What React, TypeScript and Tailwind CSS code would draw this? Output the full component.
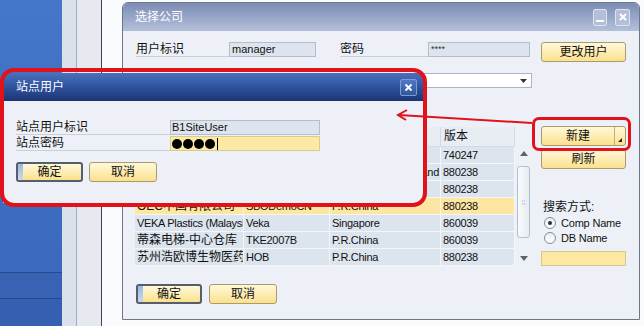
import React from "react";

type Row = { cells: string[]; cjk?: boolean; sel?: boolean; rightCountry?: boolean };

const COLS = ["w-[109px]", "w-[86px]", "w-[111px]", "w-[74px]"];
const HEAD = ["公司名称", "数据库名称", "本地设置", "版本"];

const ROWS: Row[] = [
  { cells: ["OEC Computers HK", "SBODemoHK", "Hong Kong", "740247"] },
  { cells: ["OEC Computers TH", "SBODemoTH", "Thailand", "880238"], rightCountry: true },
  { cells: ["OEC Computers CN", "SBODemoCN2", "P.R.China", "880238"] },
  { cells: ["OEC中国有限公司", "SBODemoCN", "P.R.China", "880238"], cjk: true, sel: true },
  { cells: ["VEKA Plastics (Malaysia)", "Veka", "Singapore", "860039"] },
  { cells: ["蒂森电梯-中心仓库", "TKE2007B", "P.R.China", "860039"], cjk: true },
  { cells: ["苏州浩欧博生物医药", "HOB", "P.R.China", "880238"], cjk: true },
];

function Btn({ children, className, primary }: { children: React.ReactNode; className: string; primary?: boolean }) {
  return (
    <div
      className={`relative flex h-[20px] items-center justify-center overflow-hidden rounded-[3px] bg-gradient-to-b from-[#fff8d9] to-[#fbe08c] text-[12px] leading-[14px] text-[#111] ${
        primary ? "border-2 border-[#555e6b]" : "border border-[#a99b6d]"
      } ${className}`}
    >
      {primary && <div className="absolute left-0 top-0 h-full w-[5px] bg-gradient-to-b from-[#9cb8e0] to-[#c9d9ef]" />}
      <span className="relative">{children}</span>
    </div>
  );
}

function Label({ children, className }: { children: React.ReactNode; className: string }) {
  return (
    <div className={`h-[15px] border-b border-[#c8d0dc] text-[12px] leading-[14px] text-[#111] ${className}`}>{children}</div>
  );
}

function Radio({ checked, label }: { checked?: boolean; label: string }) {
  return (
    <div className="flex h-[15px] items-center pl-[3px]">
      <div className="flex h-[12px] w-[12px] shrink-0 items-center justify-center rounded-full border border-[#7f8b9c] bg-gradient-to-b from-[#e9edf2] to-white">
        {checked && <div className="h-[4px] w-[4px] rounded-full bg-[#2a2f38]" />}
      </div>
      <span className="ml-[5px] whitespace-nowrap text-[11px] leading-[14px] tracking-[-0.2px]">{label}</span>
    </div>
  );
}

function MainDialog() {
  return (
    <div className="mt-[2px] flex h-[318px] w-[518px] shrink-0 flex-col rounded-t-[6px] border border-[#6d7787] bg-[#edf1f7]">
      {/* title bar */}
      <div className="flex h-[28px] items-center justify-between rounded-t-[5px] bg-gradient-to-b from-[#7b8cb5] to-[#b4c0da] pl-[12px] pr-[9px]">
        <span className="text-[12px] leading-[14px] text-white">选择公司</span>
        <div className="flex gap-[8px]">
          <div className="flex h-[17px] w-[14px] items-end justify-center rounded-[2px] border border-[#dde4f0] bg-[#b3bfd8] pb-[3px]">
            <div className="h-[2px] w-[8px] bg-white" />
          </div>
          <div className="flex h-[17px] w-[15px] items-center justify-center rounded-[2px] border border-[#dde4f0] bg-[#b3bfd8]">
            <svg width="8" height="8" viewBox="0 0 8 8">
              <path d="M1 1L7 7M7 1L1 7" stroke="#fff" strokeWidth="2" />
            </svg>
          </div>
        </div>
      </div>

      <div className="flex flex-1 flex-col pl-[13px]">
        {/* user row */}
        <div className="mt-[11px] flex h-[20px] items-start">
          <Label className="w-[93px]">用户标识</Label>
          <div className="h-[15px] w-[87px] border border-[#b4beca] bg-[#dde4ed] pl-[2px] leading-[13px]">manager</div>
          <Label className="ml-[24px] w-[88px]">密码</Label>
          <div className="h-[15px] w-[102px] border border-[#b4beca] bg-[#dde4ed] pl-[2px] text-[9px] leading-[13px] text-[#333]">****</div>
          <Btn className="ml-[11px] w-[85px]">更改用户</Btn>
        </div>

        {/* server row */}
        <div className="mt-[11px] flex h-[15px] items-start">
          <Label className="w-[93px]">当前服务器</Label>
          <div className="flex h-[15px] w-[303px] items-center justify-end border border-[#aab5c4] bg-white pr-[4px]">
            <svg width="7" height="4" viewBox="0 0 7 4">
              <polygon points="0,0 7,0 3.5,4" fill="#333" />
            </svg>
          </div>
        </div>

        {/* list + side column */}
        <div className="-ml-[1px] mt-[38px] flex items-start">
          <div className="mt-[1px] w-[380px]">
            <div className="flex h-[20px]">
              {HEAD.map((h, i) => (
                <div
                  key={h}
                  className={`${COLS[i]} overflow-hidden whitespace-nowrap border-b border-r border-[#d3dbe6] bg-[#e8edf4] pl-[3px] text-[12px] leading-[19px]`}
                >
                  {h}
                </div>
              ))}
            </div>
            {ROWS.map((r, ri) => (
              <div key={ri} className="flex h-[17px]">
                {r.cells.map((c, i) => (
                  <div
                    key={i}
                    className={`${COLS[i]} overflow-hidden whitespace-nowrap border-b border-r border-[#f2f5f9] ${
                      r.sel ? "bg-[#fde6a1]" : "bg-[#dce4ee]"
                    } ${i === 2 && r.rightCountry ? "pr-[1px] text-right" : "pl-[2px]"} ${
                      i === 0 && r.cjk ? "text-[12px] leading-[16px]" : "leading-[16px] tracking-[-0.3px]"
                    }`}
                  >
                    {c}
                  </div>
                ))}
              </div>
            ))}
          </div>

          {/* scrollbar */}
          <div className="ml-[2px] mt-[21px] flex h-[119px] w-[13px] flex-col items-center">
            <div className="flex h-[13px] items-center">
              <svg width="8" height="5" viewBox="0 0 8 5">
                <polygon points="0,5 8,5 4,0" fill="#5c6472" />
              </svg>
            </div>
            <div className="mt-[6px] flex h-[72px] w-[13px] items-center justify-center rounded-[3px] border border-[#b3bece] bg-gradient-to-r from-[#f8fafc] to-[#e6ebf2]">
              <span className="text-[7px] leading-[7px] text-[#a7b0bd]">⁞⁞</span>
            </div>
            <div className="flex-1" />
            <div className="flex h-[16px] items-center">
              <svg width="8" height="5" viewBox="0 0 8 5">
                <polygon points="0,0 8,0 4,5" fill="#5c6472" />
              </svg>
            </div>
          </div>

          {/* right column */}
          <div className="ml-[11px] flex w-[85px] flex-col">
            <div className="flex h-[20px] rounded-[3px] border border-[#a99b6d] bg-gradient-to-b from-[#fff8d9] to-[#fbe08c]">
              <div className="flex flex-1 items-center justify-center text-[12px] leading-[14px]">新建</div>
              <div className="flex w-[11px] items-end justify-center border-l border-[#bcae7d] pb-[3px]">
                <svg width="4" height="4" viewBox="0 0 4 4">
                  <polygon points="4,0 4,4 0,4" fill="#222" />
                </svg>
              </div>
            </div>
            <Btn className="mt-[3px] w-[85px]">刷新</Btn>
            <div className="mt-[31px] h-[15px] pl-[2px] text-[12px] leading-[14px]">搜索方式:</div>
            <Radio checked label="Comp Name" />
            <Radio label="DB Name" />
            <div className="mt-[6px] h-[15px] border border-[#d6c98f] bg-[#fde8a2]" />
          </div>
        </div>

        {/* bottom buttons */}
        <div className="mt-[18px] flex gap-[7px]">
          <Btn primary className="w-[66px]">确定</Btn>
          <Btn className="w-[68px]">取消</Btn>
        </div>
      </div>
    </div>
  );
}

function SiteUserDialog() {
  return (
    <div className="absolute left-[3px] top-[73px] flex h-[130px] w-[420px] flex-col bg-[#edf1f7]">
      <div className="flex h-[28px] items-center justify-between bg-gradient-to-b from-[#4a71bc] via-[#2f529e] to-[#1c3573] pl-[13px] pr-[6px]">
        <span className="text-[12px] leading-[14px] text-white">站点用户</span>
        <div className="flex h-[17px] w-[17px] items-center justify-center rounded-[2px] border border-[#7f9bd0] bg-gradient-to-b from-[#5079c6] to-[#2f579f]">
          <svg width="9" height="9" viewBox="0 0 9 9">
            <path d="M1.5 1.5L7.5 7.5M7.5 1.5L1.5 7.5" stroke="#fff" strokeWidth="2" />
          </svg>
        </div>
      </div>
      <div className="flex flex-col pl-[13px]">
        <div className="mt-[19px] flex h-[15px] items-start">
          <Label className="w-[154px]">站点用户标识</Label>
          <div className="h-[15px] w-[150px] border border-[#b4beca] bg-[#dde4ed] pl-[1px] leading-[13px]">B1SiteUser</div>
        </div>
        <div className="mt-[1px] flex h-[15px] items-start">
          <Label className="w-[154px]">站点密码</Label>
          <div className="flex h-[15px] w-[150px] items-center gap-[1px] border border-[#d8cc96] bg-[#fde9a4] pl-[1px]">
            <div className="h-[10px] w-[10px] rounded-full bg-black" />
            <div className="h-[10px] w-[10px] rounded-full bg-black" />
            <div className="h-[10px] w-[10px] rounded-full bg-black" />
            <div className="h-[10px] w-[10px] rounded-full bg-black" />
            <div className="ml-[1px] h-[12px] w-[1px] bg-black" />
          </div>
        </div>
        <div className="mt-[11px] flex gap-[6px]">
          <Btn primary className="w-[67px]">确定</Btn>
          <Btn className="w-[68px]">取消</Btn>
        </div>
      </div>
    </div>
  );
}

export default function App() {
  return (
    <div className="relative flex h-[326px] w-[644px] overflow-hidden bg-[#fafbfc] font-['Liberation_Sans','Noto_Sans_CJK_SC',sans-serif] text-[11px] text-[#111]">
      {/* desktop behind the dialogs */}
      <div className="flex w-[62px] shrink-0 flex-col">
        <div className="h-[272px] bg-gradient-to-b from-[#4576c9] to-[#3a69bd]" />
        <div className="h-[26px] border-t border-[#27488a] bg-[#3863b5]" />
        <div className="flex-1 border-t border-[#27488a] bg-[#3560b2]" />
      </div>
      <div className="w-[15px] shrink-0 border-r border-[#a3afc0] bg-[#dae1ea]" />
      <div className="w-[25px] shrink-0 border-r border-[#3d4452] bg-[#e6eaf0]" />
      <div className="w-[20px] shrink-0 bg-[#fafbfc]" />

      <MainDialog />
      <SiteUserDialog />

      {/* red annotations */}
      <div className="absolute left-0 top-[68px] h-[139px] w-[427px] rounded-[14px] border-[4px] border-[#e1121a]" />
      <div className="absolute left-[532px] top-[117px] h-[34px] w-[99px] rounded-[7px] border-[3px] border-[#e1121a]" />
      <svg className="absolute left-[395px] top-[108px]" width="140" height="20" viewBox="0 0 140 20">
        <path d="M137 15L4 7" stroke="#e1121a" strokeWidth="2" fill="none" />
        <path d="M12 2L3 7L11 12" stroke="#e1121a" strokeWidth="2" fill="none" />
      </svg>
    </div>
  );
}
